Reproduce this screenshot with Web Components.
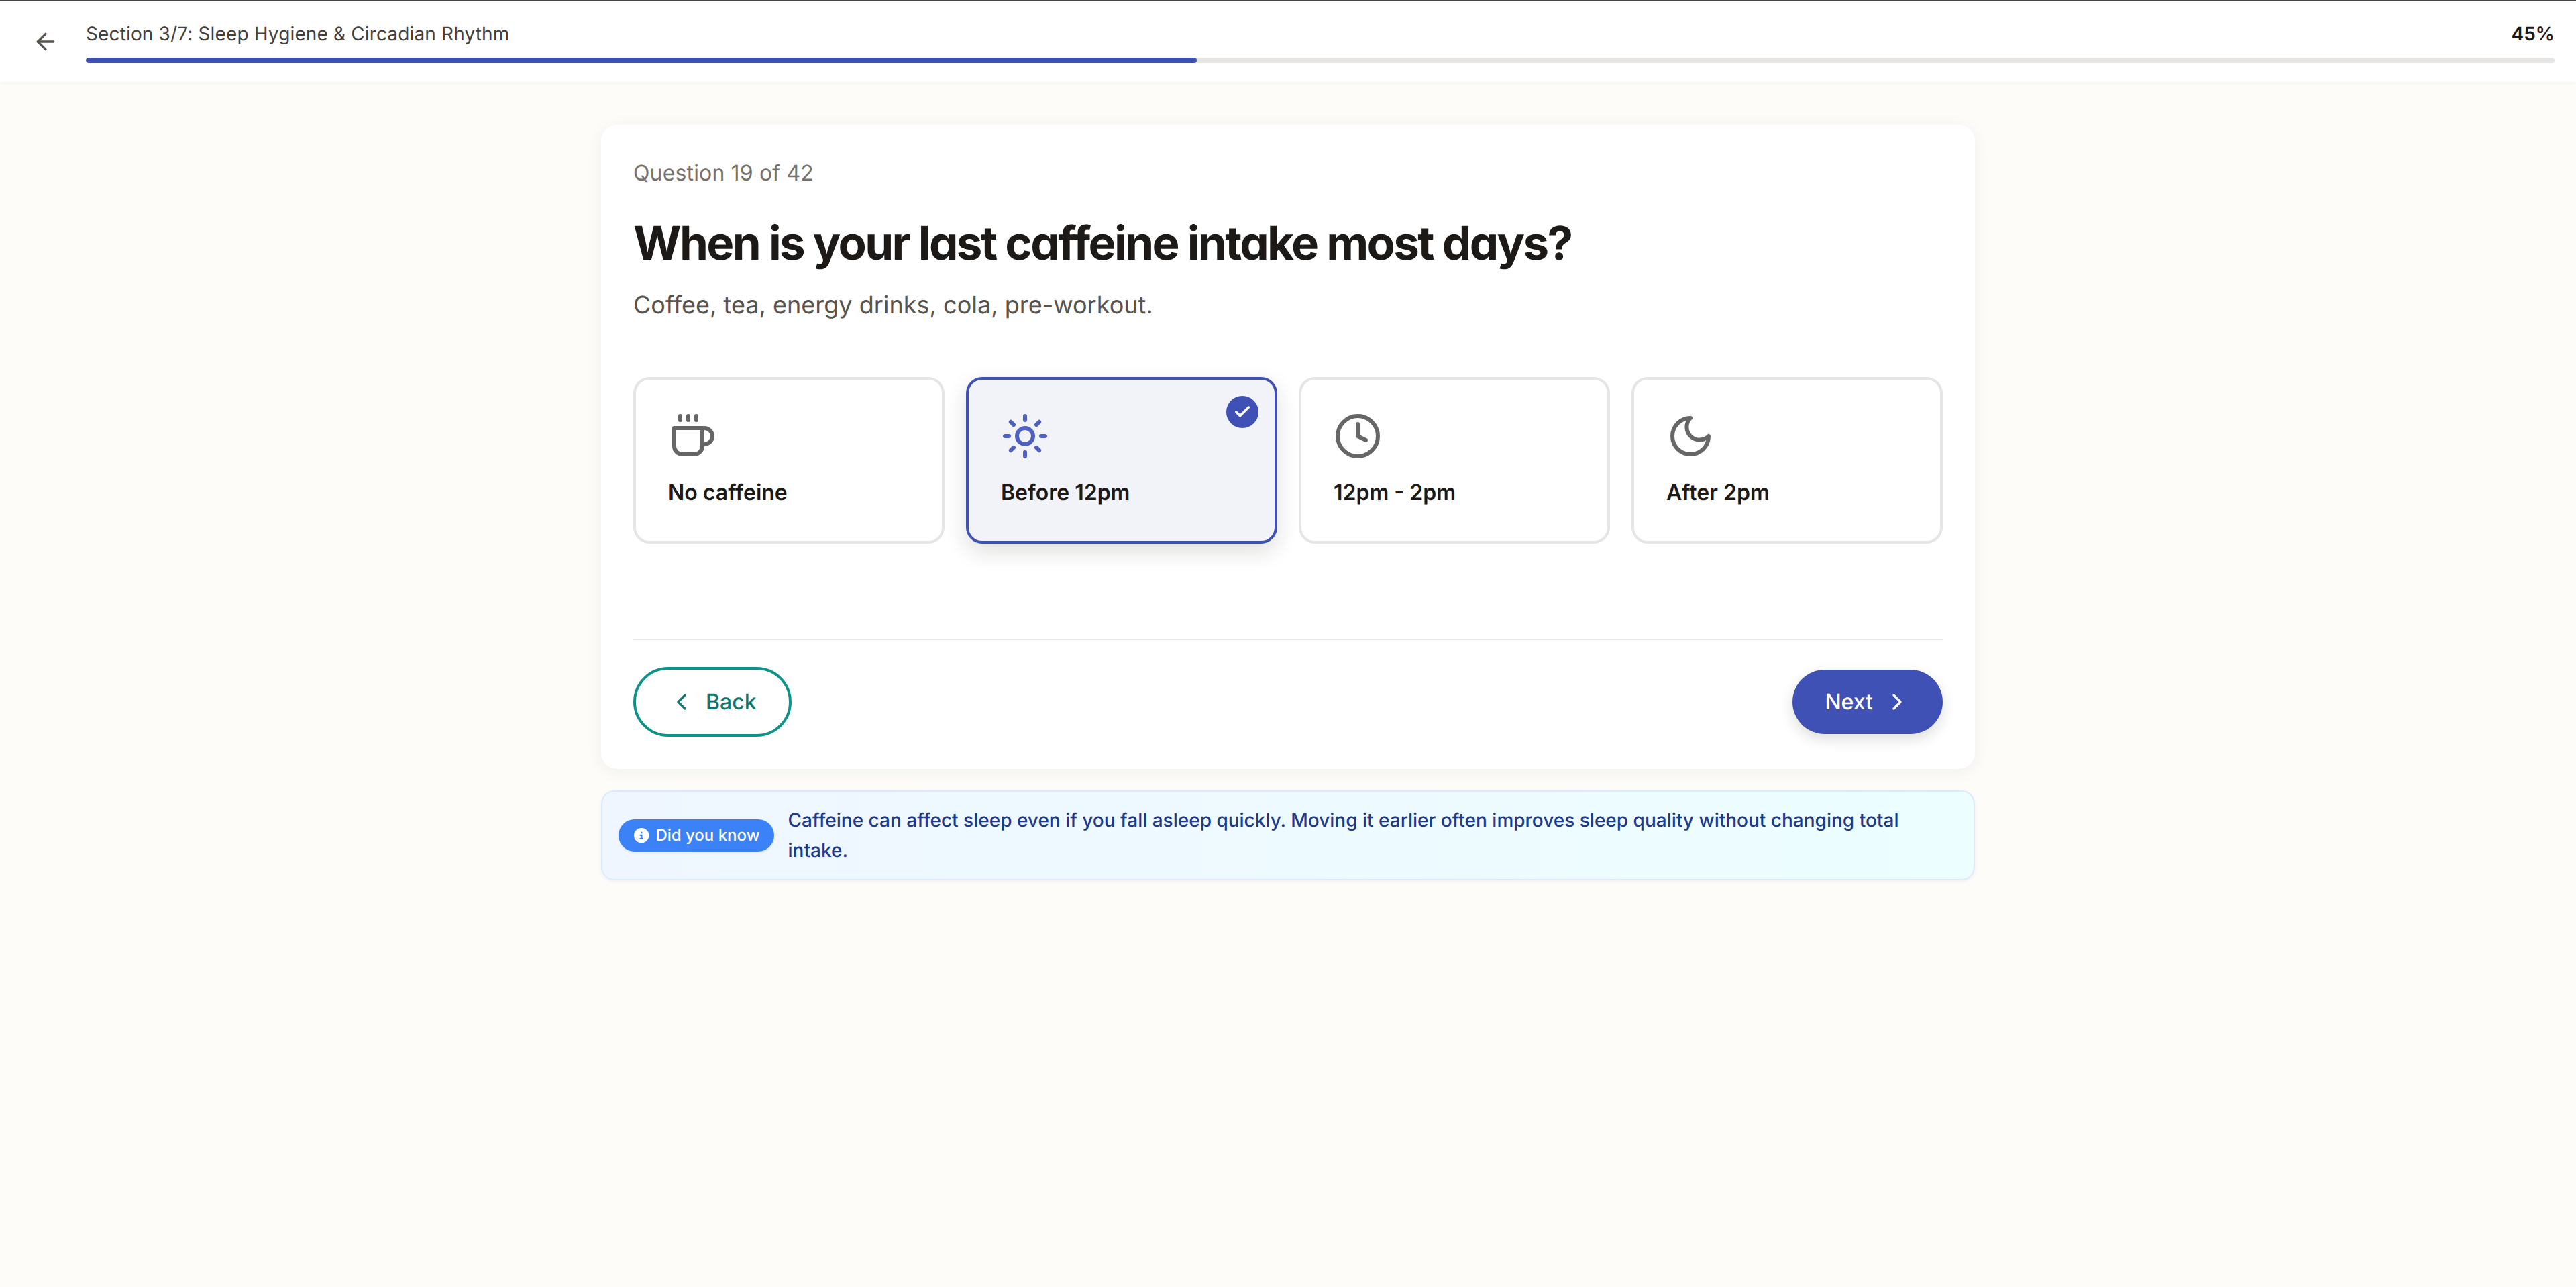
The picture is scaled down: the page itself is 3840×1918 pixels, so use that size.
<!doctype html>
<html>
<head>
  <meta charset="utf-8">
  <title>Sleep assessment</title>
  <style>
    html, body {
      margin: 0;
      min-height: 100%;
      background: #fdfcf8;
    }
  </style>
</head>
<body>
  <quiz-app>
    <quiz-header slot="header" label="Section 3/7: Sleep Hygiene &amp; Circadian Rhythm" percent="45"></quiz-header>
    <quiz-card
      counter="Question 19 of 42"
      title="When is your last caffeine intake most days?"
      hint="Coffee, tea, energy drinks, cola, pre-workout.">
      <option-card slot="options" icon="coffee">No caffeine</option-card>
      <option-card slot="options" icon="sun" selected>Before 12pm</option-card>
      <option-card slot="options" icon="clock">12pm - 2pm</option-card>
      <option-card slot="options" icon="moon">After 2pm</option-card>
      <quiz-button slot="back" kind="outline" icon="chevron-left" lead>Back</quiz-button>
      <quiz-button slot="next" kind="solid" icon="chevron-right">Next</quiz-button>
    </quiz-card>
    <fact-box label="Did you know">Caffeine can affect sleep even if you fall asleep quickly. Moving it earlier often improves sleep quality without changing total intake.</fact-box>
  </quiz-app>

  <script>
    const ICONS = {
      'arrow-left': '<path d="m12 19-7-7 7-7"/><path d="M19 12H5"/>',
      'chevron-left': '<path d="m15 18-6-6 6-6"/>',
      'chevron-right': '<path d="m9 18 6-6-6-6"/>',
      'check': '<path d="M20 6 9 17l-5-5"/>',
      'coffee': '<path d="M17 8h1a4 4 0 1 1 0 8h-1"/><path d="M3 8h14v9a4 4 0 0 1-4 4H7a4 4 0 0 1-4-4Z"/><line x1="6" x2="6" y1="2" y2="4"/><line x1="10" x2="10" y1="2" y2="4"/><line x1="14" x2="14" y1="2" y2="4"/>',
      'sun': '<circle cx="12" cy="12" r="4"/><path d="M12 2v2"/><path d="M12 20v2"/><path d="m4.93 4.93 1.41 1.41"/><path d="m17.66 17.66 1.41 1.41"/><path d="M2 12h2"/><path d="M20 12h2"/><path d="m6.34 17.66-1.41 1.41"/><path d="m19.07 4.93-1.41 1.41"/>',
      'clock': '<circle cx="12" cy="12" r="10"/><polyline points="12 6 12 12 16 14"/>',
      'moon': '<path d="M12 3a6 6 0 0 0 9 9 9 9 0 1 1-9-9Z"/>'
    };

    function iconSvg(name, size, stroke) {
      return `<svg width="${size}" height="${size}" viewBox="0 0 24 24" fill="none" stroke="currentColor" stroke-width="${stroke}" stroke-linecap="round" stroke-linejoin="round">${ICONS[name]}</svg>`;
    }

    customElements.define('quiz-app', class extends HTMLElement {
      connectedCallback() {
        this.root = this.attachShadow({mode: 'open'});
        this.root.innerHTML = `
          <style>
            :host {
              display: flex;
              flex-direction: column;
              min-height: 100vh;
              font-family: Inter, "Liberation Sans", sans-serif;
              font-optical-sizing: none;
              text-rendering: geometricPrecision;
              color: #1c1917;
            }
            main {
              display: flex;
              flex-direction: column;
              gap: 32px;
              width: 2048px;
              margin: 0 auto;
              padding-top: 64px;
            }
          </style>
          <slot name="header"></slot>
          <main><slot></slot></main>`;
      }
    });

    customElements.define('quiz-header', class extends HTMLElement {
      connectedCallback() {
        this.root = this.attachShadow({mode: 'open'});
        const percent = this.getAttribute('percent');
        this.root.innerHTML = `
          <style>
            :host {
              display: flex;
              align-items: center;
              gap: 40px;
              box-sizing: border-box;
              height: 122px;
              padding: 0 32px 0 48px;
              border-top: 2px solid #444;
              background: #fff;
              box-shadow: 0 2px 6px rgba(0, 0, 0, 0.04);
            }
            .back { display: flex; color: #57534e; }
            .main { flex: 1; display: flex; flex-direction: column; gap: 16px; }
            .row {
              display: flex;
              justify-content: space-between;
              font-size: 28px;
              line-height: 40px;
              color: #44403c;
            }
            .label { letter-spacing: 0.14px; }
            .pct { font-weight: 600; color: #1c1917; }
            .track { height: 8px; border-radius: 4px; background: #e7e5e4; overflow: hidden; }
            .fill { height: 100%; width: ${percent}%; border-radius: 4px; background: #3f51b5; }
            svg { display: block; }
          </style>
          <div class="back">${iconSvg('arrow-left', 40, 2)}</div>
          <div class="main">
            <div class="row"><span class="label"></span><span class="pct">${percent}%</span></div>
            <div class="track"><div class="fill"></div></div>
          </div>`;
        this.root.querySelector('.label').textContent = this.getAttribute('label');
      }
    });

    customElements.define('quiz-card', class extends HTMLElement {
      connectedCallback() {
        this.root = this.attachShadow({mode: 'open'});
        this.root.innerHTML = `
          <style>
            :host {
              display: block;
              padding: 48px;
              border-radius: 24px;
              background: #fff;
              box-shadow: 0 4px 24px rgba(28, 25, 23, 0.06);
            }
            .counter { font-size: 32px; line-height: 48px; letter-spacing: 0.15px; color: #78716c; }
            h1 {
              margin: 40px 0 0;
              font-size: 69px;
              line-height: 80px;
              font-weight: 650;
              font-optical-sizing: auto;
              letter-spacing: -2.6px;
              font-feature-settings: "cv11";
              color: #1c1917;
            }
            .hint { margin-top: 24px; font-size: 36px; line-height: 56px; color: #57534e; }
            .options {
              display: grid;
              grid-template-columns: repeat(4, 1fr);
              gap: 32px;
              margin-top: 80px;
            }
            .foot {
              display: flex;
              justify-content: space-between;
              align-items: center;
              margin-top: 142px;
              padding-top: 40px;
              border-top: 2px solid #e7e5e4;
            }
          </style>
          <div class="counter"></div>
          <h1></h1>
          <div class="hint"></div>
          <div class="options"><slot name="options"></slot></div>
          <div class="foot"><slot name="back"></slot><slot name="next"></slot></div>`;
        this.root.querySelector('.counter').textContent = this.getAttribute('counter');
        this.root.querySelector('h1').textContent = this.getAttribute('title');
        this.root.querySelector('.hint').textContent = this.getAttribute('hint');
      }
    });

    customElements.define('option-card', class extends HTMLElement {
      connectedCallback() {
        this.root = this.attachShadow({mode: 'open'});
        const selected = this.hasAttribute('selected');
        this.root.innerHTML = `
          <style>
            :host {
              display: flex;
              flex-direction: column;
              gap: 24px;
              position: relative;
              box-sizing: border-box;
              height: 248px;
              padding: 48px;
              border: 4px solid #e7e5e4;
              border-radius: 24px;
              background: #fff;
              font-size: 32px;
              line-height: 48px;
              font-weight: 600;
              color: #1c1917;
            }
            :host([selected]) {
              border-color: #3f51b5;
              background: #f2f3f9;
              box-shadow: 0 12px 32px rgba(28, 25, 23, 0.14);
            }
            .icon { display: flex; color: #666; }
            :host([selected]) .icon { color: #4f61c0; }
            .tick {
              position: absolute;
              top: 24px;
              right: 24px;
              display: flex;
              align-items: center;
              justify-content: center;
              width: 48px;
              height: 48px;
              border-radius: 50%;
              background: #3f51b5;
              color: #fff;
            }
            svg { display: block; }
          </style>
          <div class="icon">${iconSvg(this.getAttribute('icon'), 72, 2)}</div>
          <div><slot></slot></div>
          ${selected ? `<div class="tick">${iconSvg('check', 28, 3)}</div>` : ''}`;
      }
    });

    customElements.define('quiz-button', class extends HTMLElement {
      connectedCallback() {
        this.root = this.attachShadow({mode: 'open'});
        const icon = iconSvg(this.getAttribute('icon'), 40, 2);
        const lead = this.hasAttribute('lead');
        this.root.innerHTML = `
          <style>
            :host {
              display: inline-flex;
              align-items: center;
              gap: 16px;
              padding: 24px 48px;
              border-radius: 999px;
              font-size: 32px;
              line-height: 48px;
              font-weight: 450;
            }
            :host([kind="outline"]) { border: 4px solid #0d9488; color: #0f766e; background: #fff; }
            :host([kind="solid"]) { background: #3f51b5; color: #fff; box-shadow: 0 8px 20px rgba(28, 25, 23, 0.14); }
            svg { display: block; }
          </style>
          ${lead ? icon : ''}<slot></slot>${lead ? '' : icon}`;
      }
    });

    customElements.define('fact-box', class extends HTMLElement {
      connectedCallback() {
        this.root = this.attachShadow({mode: 'open'});
        this.root.innerHTML = `
          <style>
            :host {
              display: flex;
              align-items: center;
              gap: 21px;
              padding: 20px 24px;
              border: 2px solid #dbeafe;
              border-radius: 20px;
              background: linear-gradient(90deg, #eff6ff, #ecfeff);
              box-shadow: 0 2px 6px rgba(28, 25, 23, 0.05);
              font-size: 28px;
              line-height: 44.8px;
              font-weight: 500;
              color: #1e3a8a;
            }
            .badge {
              flex: none;
              display: inline-flex;
              align-items: center;
              gap: 10px;
              height: 48px;
              padding: 0 21px 0 23px;
              border-radius: 999px;
              background: #3b82f6;
              box-shadow: 0 2px 4px rgba(28, 25, 23, 0.06);
              font-size: 24px;
              line-height: 32px;
              color: #fff;
            }
            svg { display: block; }
          </style>
          <span class="badge">
            <svg width="22.4" height="22.4" viewBox="0 0 512 512" fill="#fff"><path d="M256 512A256 256 0 1 0 256 0a256 256 0 1 0 0 512zM216 336h24V272H216c-13.3 0-24-10.7-24-24s10.7-24 24-24h48c13.3 0 24 10.7 24 24v88h8c13.3 0 24 10.7 24 24s-10.7 24-24 24H216c-13.3 0-24-10.7-24-24s10.7-24 24-24zm40-208a32 32 0 1 1 0 64 32 32 0 1 1 0-64z"/></svg>
            <span></span>
          </span>
          <div><slot></slot></div>`;
        this.root.querySelector('.badge span').textContent = this.getAttribute('label');
      }
    });
  </script>
</body>
</html>
